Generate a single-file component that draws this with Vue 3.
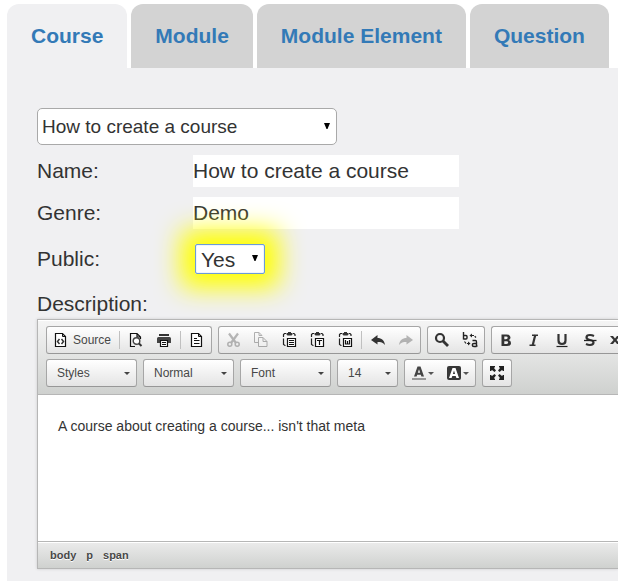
<script setup>
import { ref } from 'vue'

const tabs = ['Course', 'Module', 'Module Element', 'Question']
const activeTab = ref('Course')
const course = ref('How to create a course')
const name = ref('How to create a course')
const genre = ref('Demo')
const visibility = ref('Yes')
const pasteTools = [
  { label: 'Paste', mark: 'M8 8.500h5M8 10.500h5M8 12.500h5' },
  { label: 'Paste as plain text', mark: 'M8 8.500h5M10.500 8.500V13' },
  { label: 'Paste from Word', mark: 'M8.500 8v4h4V8M10.500 9v3' },
]
const combos = [
  { label: 'Styles', text: 'Styles', size: 'wide' },
  { label: 'Paragraph format', text: 'Normal', size: 'wide' },
  { label: 'Font family', text: 'Font', size: 'wide' },
  { label: 'Font size', text: '14', size: 'narrow' },
]
</script>

<template>
  <div class="page">
    <nav class="tabs">
      <a v-for="tab in tabs" :key="tab" href="#" class="tab" :class="{ active: tab === activeTab }" @click.prevent="activeTab = tab">{{ tab }}</a>
    </nav>

    <main class="panel">
      <div class="select-box course-box">
        <select v-model="course" class="course-select" aria-label="Select course">
          <option>How to create a course</option>
        </select>
        <svg class="arrow" width="6" height="6" viewBox="0 0 6 6"><path d="M0 0h6L3.5 6h-1z" fill="#000" /></svg>
      </div>

      <div class="field">
        <label for="name">Name:</label>
        <input id="name" v-model="name" type="text" />
      </div>
      <div class="field">
        <label for="genre">Genre:</label>
        <input id="genre" v-model="genre" type="text" />
      </div>
      <div class="field public">
        <label for="public">Public:</label>
        <div class="select-box glow">
          <select id="public" v-model="visibility" class="public-select">
            <option>Yes</option>
            <option>No</option>
          </select>
          <svg class="arrow" width="6" height="6" viewBox="0 0 6 6"><path d="M0 0h6L3.5 6h-1z" fill="#000" /></svg>
        </div>
      </div>
      <div class="description" id="description">Description:</div>

      <section class="editor" aria-labelledby="description">
        <div class="toolbar">
          <div class="row">
            <div class="group">
              <button type="button" class="tool source">
                <svg class="icon" viewBox="0 0 16 16"><path d="M9.500 1.500h-7v13h10V4.500z" fill="#fff" stroke="#111" stroke-width="1.200" /><path d="M9.500 1.500v3h3" fill="none" stroke="#111" /><path d="M6.500 7L4.500 9.500l2 2.500M8.500 7l2 2.500-2 2.500" fill="none" stroke="#333" stroke-width="1.500" /></svg>
                <span>Source</span>
              </button>
              <span class="sep"></span>
              <button type="button" class="tool" aria-label="Preview">
                <svg class="icon" viewBox="0 0 16 16"><path d="M7 14.500H2.500v-13H9L12.500 5v2M9 1.500V5h3.500" fill="none" stroke="#111" stroke-width="1.200" /><circle cx="8.500" cy="9" r="3.300" fill="#fff" stroke="#444" stroke-width="1.400" /><path d="M11 11.500l2.500 2.500" stroke="#333" stroke-width="2" /></svg>
              </button>
              <button type="button" class="tool" aria-label="Print">
                <svg class="icon" viewBox="0 0 16 16"><path d="M3 2h10v2H3z" fill="#333" /><path d="M2.500 5h11Q15 5 15 6.500V11h-3V8H4v3H1V6.500Q1 5 2.500 5z" fill="#444" /><path d="M4.500 8.500h7v6h-7z" fill="#fff" stroke="#111" stroke-width="1.200" /><path d="M6 10.500h4M6 12.500h4" stroke="#111" /></svg>
              </button>
              <span class="sep"></span>
              <button type="button" class="tool" aria-label="Templates">
                <svg class="icon" viewBox="0 0 16 16"><path d="M9.500 1.500h-7v13h10V4.500z" fill="#fff" stroke="#111" stroke-width="1.200" /><path d="M9.500 1.500v3h3M5 6.500h3M5 8.500h5.500M5 11.500h5.500" fill="none" stroke="#111" /></svg>
              </button>
            </div>

            <div class="group">
              <button type="button" class="tool faded" aria-label="Cut">
                <svg class="icon" viewBox="0 0 16 16" fill="none" stroke="#555"><path d="M4 1.500L11 11M13 1.500L6 11" stroke-width="2.200" /><circle cx="4.800" cy="12.300" r="2" stroke-width="1.500" /><circle cx="12.200" cy="12.300" r="2" stroke-width="1.500" /></svg>
              </button>
              <button type="button" class="tool faded" aria-label="Copy">
                <svg class="icon" viewBox="0 0 16 16" fill="none" stroke="#444"><path d="M5 10.500H1.500v-10H6L9 3.500M6 .500v3h3" /><path d="M5.500 5.500H10l4 4v5H5.500zM10 5.500v4h4" fill="#f5f5f5" /></svg>
              </button>
              <button v-for="tool in pasteTools" :key="tool.label" type="button" class="tool" :aria-label="tool.label">
                <svg class="icon" viewBox="0 0 16 16" fill="none">
                  <path d="M5 1.500H3.500L2.500 2.500V5M2.500 6.500V12.500L4 13.500h.500M12 1.500h1l1 1V4" stroke="#222" stroke-width="1.200" />
                  <path d="M5.500 1h6v1.500l-1 1h-4l-1-1zM7 0h3v1H7z" fill="#333" />
                  <path d="M6.500 6.500h8v8h-8z" fill="#fff" stroke="#111" stroke-width="1.200" />
                  <path :d="tool.mark" stroke="#111" stroke-width="1.200" />
                </svg>
              </button>
              <span class="sep"></span>
              <button type="button" class="tool" aria-label="Undo">
                <svg class="icon" viewBox="0 0 16 16"><path d="M1 8L7.500 3v3c4 0 7 2.500 7.500 7C13 10.500 11 10 7.500 10v2.500z" fill="#333" /></svg>
              </button>
              <button type="button" class="tool faded" aria-label="Redo">
                <svg class="icon" viewBox="0 0 16 16"><path d="M15 8L8.500 3v3C4.500 6 1.500 8.500 1 13c2-2.500 4-3 7.500-3v2.500z" fill="#555" /></svg>
              </button>
            </div>

            <div class="group">
              <button type="button" class="tool" aria-label="Find">
                <svg class="icon" viewBox="0 0 16 16"><circle cx="6" cy="6" r="4" fill="none" stroke="#333" stroke-width="2.200" /><path d="M9 9l5 5" stroke="#333" stroke-width="2.800" /></svg>
              </button>
              <button type="button" class="tool" aria-label="Replace">
                <svg class="icon" viewBox="0 0 16 16" fill="none" stroke="#222"><path d="M1.500 0v7.500M1.500 3.500h2.500q1 0 1 1v1.500q0 1-1 1H1.500" stroke-width="1.400" /><path d="M10.500 8.500h3q1 0 1 1.500v4h1M14.500 11.500H12q-1.700 0-1.700 1.500t1.700 1.500h2.500" stroke-width="1.400" /><path d="M9.500 3.500H12l2 2M2.500 9.500l1.500 2h2.500" stroke-width="1.200" stroke-dasharray="2.500 1" /><path d="M10 1.500v4L7.500 3.500zM6 9.500v4l2.500-2z" fill="#222" stroke="none" /></svg>
              </button>
            </div>

            <div class="group styles-group">
              <button type="button" class="tool" aria-label="Bold">
                <svg class="icon" viewBox="0 0 16 16"><path fill-rule="evenodd" d="M3.500 2.500H8.500q4 0 4 3 0 2-2 2.500 2.500.500 2.500 3 0 3-4 3H3.500zM6.300 4.500v2.700h1.700q1.700 0 1.700-1.400T8 4.500zm0 4.700V12H8.500q1.700 0 1.700-1.400T8.500 9.200z" fill="#333" /></svg>
              </button>
              <button type="button" class="tool" aria-label="Italic">
                <svg class="icon" viewBox="0 0 16 16"><path d="M6 3.300h6M3.500 13.200h6" stroke="#333" stroke-width="1.500" /><path d="M9.300 3L6.600 13.500" stroke="#333" stroke-width="2.200" /></svg>
              </button>
              <button type="button" class="tool" aria-label="Underline">
                <svg class="icon" viewBox="0 0 16 16"><path d="M4.500 2v6.500Q4.500 12 8 12t3.500-3.500V2" fill="none" stroke="#333" stroke-width="2.200" /><path d="M2.500 14.500h11" stroke="#222" stroke-width="1.200" /></svg>
              </button>
              <button type="button" class="tool" aria-label="Strikethrough">
                <svg class="icon" viewBox="0 0 16 16"><path d="M12 4Q10 3 8 3 4.500 3 4.500 5.300T8 8t3.500 2.500T8 13q-2 0-4-1" fill="none" stroke="#333" stroke-width="2.200" /><path d="M2 8.500h12.500" stroke="#222" stroke-width="1.300" /></svg>
              </button>
              <button type="button" class="tool" aria-label="Subscript">
                <svg class="icon" viewBox="0 0 16 16"><path d="M0 4h3l2 2.500L7 4h3L6.500 8 10 12H7L5 9.500 3 12H0l3.500-4z" fill="#333" /><path d="M11 11h3v2h-3v2h3" fill="none" stroke="#333" /></svg>
              </button>
            </div>
          </div>

          <div class="row">
            <div v-for="combo in combos" :key="combo.label" class="select-box combo" :class="combo.size">
              <select :aria-label="combo.label"><option>{{ combo.text }}</option></select>
              <svg class="arrow" width="6" height="3" viewBox="0 0 6 3"><path d="M0 0h6L3 3z" fill="#444" /></svg>
            </div>
            <div class="group">
              <button type="button" class="tool color" aria-label="Text color">
                <svg class="icon" viewBox="0 0 16 16"><path fill-rule="evenodd" d="M3 11.500L6.500 1.500h3L13 11.500h-2.600L9.800 9.700H6.200l-.6 1.800zM6.800 7.800h2.400L8 4.300z" fill="#444" /><path d="M1 13h14v2H1z" fill="#999" /></svg>
                <svg width="6" height="3" viewBox="0 0 6 3"><path d="M0 0h6L3 3z" fill="#555" /></svg>
              </button>
              <button type="button" class="tool color" aria-label="Background color">
                <svg class="icon" viewBox="0 0 16 16"><rect x="1" y="1" width="14" height="14" rx="2" fill="#383838" /><path fill-rule="evenodd" d="M3 13L6.500 3h3L13 13h-2.600l-.7-2H6.300l-.7 2zM6.900 9h2.200L8 5.500z" fill="#fff" /></svg>
                <svg width="6" height="3" viewBox="0 0 6 3"><path d="M0 0h6L3 3z" fill="#555" /></svg>
              </button>
            </div>
            <div class="group">
              <button type="button" class="tool" aria-label="Maximize">
                <svg class="icon" viewBox="0 0 16 16"><path d="M1 1h5v1L5 3l2 2.500L5.500 7 3 5 2 6H1zM15 1v5h-1l-1-1-2.500 2L9 5.500 11 3l-1-1V1zM1 15v-5h1l1 1 2.500-2L7 10.500 5 13l1 1v1zM15 15h-5v-1l1-1-2-2.500L10.500 9l2.500 2 1-1h1z" fill="#222" /></svg>
              </button>
            </div>
          </div>
        </div>
        <div class="content" contenteditable="true" role="textbox" aria-labelledby="description"><p>A course about creating a course... isn't that meta</p></div>
        <div class="path"><a href="#">body</a><a href="#">p</a><a href="#">span</a></div>
      </section>
    </main>
  </div>
</template>

<style>
body {
  margin: 0;
  background: #fff;
}
</style>

<style scoped>
* {
  box-sizing: border-box;
}
.page {
  display: flex;
  flex-direction: column;
  min-height: 100vh;
  padding: 4px 0 0 7px;
  overflow: hidden;
  font-family: "Liberation Sans", Arial, sans-serif;
  font-size: 21px;
  line-height: 30px;
  color: #333;
}
.tabs {
  display: flex;
  gap: 4px;
}
.tab {
  padding: 17px 24px;
  border-radius: 12px 12px 0 0;
  background: #d3d3d3;
  color: #337ab7;
  font-weight: bold;
  text-decoration: none;
  white-space: nowrap;
}
.tab.active {
  background: #f0f0f2;
}
.panel {
  flex: 1;
  padding: 40px 0 12px 30px;
  background: #f0f0f2;
}
select,
input,
button {
  margin: 0;
  font-family: inherit;
  color: inherit;
}
select {
  display: block;
  width: 100%;
  appearance: none;
  outline: 0;
}
.select-box {
  position: relative;
}
.arrow {
  position: absolute;
  top: 50%;
  right: 7px;
  margin-top: -4px;
  pointer-events: none;
}
.course-box {
  width: 300px;
  margin-bottom: 10px;
}
.course-select {
  height: 37px;
  padding: 0 4px;
  border: 1px solid #a9a9a9;
  border-radius: 5px;
  background: #fff;
  font-size: 19px;
}
.field {
  display: flex;
  align-items: center;
  height: 32px;
  margin-bottom: 10px;
}
.field label {
  width: 156px;
}
.field input {
  width: 266px;
  height: 32px;
  padding: 0;
  border: 0;
  background: #fff;
  font-size: 21px;
}
.public {
  margin: 14px 0;
}
.glow {
  width: 70px;
  margin-left: 2px;
  border-radius: 2px;
  box-shadow: 0 0 26px 14px #ff0;
}
.public-select {
  height: 30px;
  padding: 0 5px;
  border: 1px solid #6b9bd8;
  border-radius: 2px;
  background: #fff;
  box-shadow: inset 0 0 1px #6b9bd8;
  font-size: 21px;
}
.editor {
  border: 1px solid #b6b6b6;
  border-right: 0;
  box-shadow: 0 0 3px rgba(0, 0, 0, 0.15);
  font-size: 12px;
  line-height: 16px;
}
.toolbar {
  display: flex;
  flex-direction: column;
  gap: 5px;
  padding: 6px 0 7px 8px;
  overflow: hidden;
  border-bottom: 1px solid #b6b6b6;
  background: linear-gradient(#f5f5f5, #cfd1cf);
  box-shadow: inset 0 1px 0 #fff;
}
.row {
  display: flex;
  gap: 6px;
}
.group {
  display: flex;
  flex: none;
  align-items: center;
  height: 28px;
  border: 1px solid #a6a6a6;
  border-bottom-color: #979797;
  border-radius: 3px;
  background: linear-gradient(#fff, #e4e4e4);
}
.styles-group {
  border-right: 0;
}
.tool {
  display: flex;
  align-items: center;
  height: 26px;
  padding: 0 6px;
  border: 0;
  background: none;
  font-size: 12px;
  line-height: 16px;
}
.source {
  gap: 4px;
  color: #484848;
}
.color {
  gap: 1px;
}
.icon {
  display: block;
  flex: none;
  width: 16px;
  height: 16px;
}
.faded .icon {
  opacity: 0.4;
}
.sep {
  width: 1px;
  height: 18px;
  margin: 0 2px;
  background: #c0c0c0;
}
.combo {
  flex: none;
}
.combo.wide {
  width: 91px;
}
.combo.narrow {
  width: 61px;
}
.combo select {
  height: 28px;
  padding: 0 10px;
  border: 1px solid #a6a6a6;
  border-bottom-color: #979797;
  border-radius: 3px;
  background: linear-gradient(#fff, #e4e4e4);
  color: #474747;
  font-size: 12px;
}
.combo .arrow {
  margin-top: -1px;
}
.content {
  height: 146px;
  padding: 20px;
  outline: 0;
  background: #fff;
  font-size: 14px;
  line-height: 22px;
}
.content p {
  margin: 0;
}
.path {
  display: flex;
  gap: 10px;
  padding: 5px 12px;
  border-top: 1px solid #b6b6b6;
  background: linear-gradient(#ebebeb, #cfd1cf);
  box-shadow: inset 0 1px 0 #fff;
}
.path a {
  color: #484848;
  font-size: 11px;
  font-weight: bold;
  text-decoration: none;
  text-shadow: 0 1px 0 #fff;
}
</style>
